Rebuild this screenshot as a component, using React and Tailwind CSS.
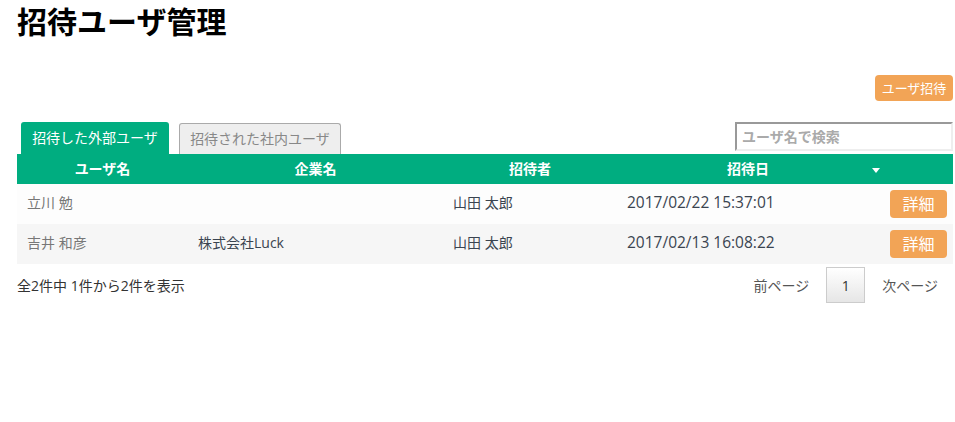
import React from "react";

const font = { fontFamily: '"Open Sans", "Noto Sans CJK JP", sans-serif' };

export default function App() {
  const rows = [
    { name: "立川 勉", company: "", inviter: "山田 太郎", date: "2017/02/22 15:37:01", bg: "bg-[#fdfdfd]" },
    { name: "吉井 和彦", company: "株式会社Luck", inviter: "山田 太郎", date: "2017/02/13 16:08:22", bg: "bg-[#f6f6f6]" },
  ];
  return (
    <div className="w-[955px] h-[422px] bg-white pl-[17px] pr-[2px] text-[#333]" style={font}>
      <h1 className="pt-[4px] text-[30px] leading-[36px] font-bold text-black">招待ユーザ管理</h1>
      <div className="flex justify-end mt-[35px]">
        <button className="h-[26px] w-[78px] rounded-[4px] bg-[#f2a456] text-white text-[13px] leading-[26px]" style={font}>ユーザ招待</button>
      </div>
      <div className="flex items-start justify-between mt-[21px]">
        <div className="flex items-end gap-[10px] pl-[4px]">
          <div className="h-[32px] w-[148px] rounded-t-[3px] bg-[#00ad80] text-white text-[14px] leading-[32px] text-center">招待した外部ユーザ</div>
          <div className="h-[31px] w-[162px] rounded-t-[3px] border border-[#aaa] border-b-0 bg-[#eee] text-[#888] text-[14px] leading-[30px] text-center">招待された社内ユーザ</div>
        </div>
        <input
          className="h-[29px] w-[218px] border-2 border-t-[#999] border-l-[#999] border-r-[#eee] border-b-[#eee] pl-[5px] text-[14px] font-bold placeholder:text-[#aaa] outline-none"
          placeholder="ユーザ名で検索"
          style={font}
        />
      </div>
      <div className="w-[936px]">
        <div className="relative grid grid-cols-[171px_255px_174px_262px_1fr] h-[30px] pb-[2px] bg-[#00ad80] text-white text-[14px] font-bold items-center">
          <div className="text-center">ユーザ名</div>
          <div className="text-center">企業名</div>
          <div className="text-center">招待者</div>
          <div className="text-center">招待日</div>
          <div></div>
          <span className="absolute left-[855px] top-[14px] w-0 h-0 border-l-[4px] border-r-[4px] border-t-[5px] border-l-transparent border-r-transparent border-t-white"></span>
        </div>
        {rows.map((r, i) => (
          <div key={i} className={`grid grid-cols-[171px_255px_174px_262px_1fr] h-[40px] items-center text-[14px] ${r.bg}`}>
            <div className="pl-[10px] pb-[3px] text-[#777]">{r.name}</div>
            <div className="pl-[10px] pb-[3px] text-[#3a4450]">{r.company}</div>
            <div className="pl-[10px] pb-[3px] text-[#3a4450]">{r.inviter}</div>
            <div className="pl-[10px] pb-[3px] text-[15.5px] text-[#3a4450]">{r.date}</div>
            <div className="flex justify-end pr-[6px]">
              <button className="h-[28px] w-[57px] rounded-[4px] bg-[#f2a456] text-white text-[16px] leading-[28px]" style={font}>詳細</button>
            </div>
          </div>
        ))}
      </div>
      <div className="flex items-center justify-between w-[936px] mt-[3px]">
        <div className="text-[14px] text-[#333]">全2件中 1件から2件を表示</div>
        <div className="flex items-center text-[14px] text-[#555]">
          <span>前ページ</span>
          <span className="ml-[17px] h-[36px] w-[39px] flex items-center justify-center border border-[#ccc] bg-gradient-to-b from-white to-[#e6e6e6] text-[#333]">1</span>
          <span className="ml-[17px] mr-[15px]">次ページ</span>
        </div>
      </div>
    </div>
  );
}
